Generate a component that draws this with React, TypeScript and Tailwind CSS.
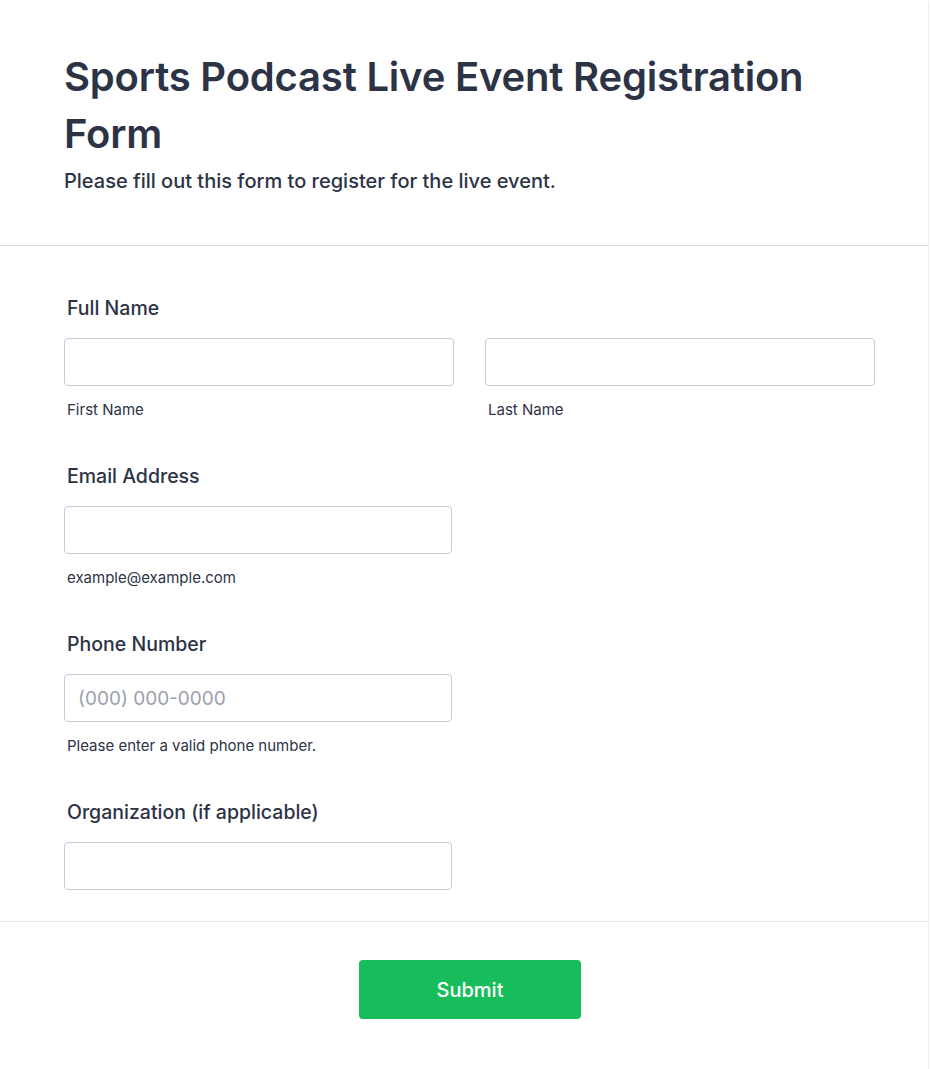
import React from 'react'

const font = { fontFamily: 'Inter, "Noto Sans", sans-serif' }

function Field({
  label,
  sub,
  placeholder,
  width = 'w-[388px]',
}: {
  label: string
  sub?: string
  placeholder?: string
  width?: string
}) {
  return (
    <div className="flex flex-col">
      <label className="pl-[3px] text-[19.5px] leading-[28px] font-medium text-[#2c3345]">{label}</label>
      <input
        type="text"
        placeholder={placeholder}
        className={`mt-4 h-12 ${width} rounded-[4px] border border-[#c3cad8] bg-white px-[13px] text-[19px] text-[#2c3345] placeholder:text-[#9ba1ac] focus:outline-none`}
      />
      {sub && <div className="mt-[14px] pl-[3px] text-[15px] leading-5 text-[#2c3345]">{sub}</div>}
    </div>
  )
}

export default function App() {
  return (
    <div className="min-h-[1069px] bg-white" style={font}>
      <div className="w-[929px] min-h-[1069px] bg-white border-r border-[#ebebf2] rounded-tr-[4px] flex flex-col">
        {/* Header */}
        <div className="px-16 pt-[48px] pb-[53px] border-b border-[#dcdce6]">
          <h1 className="text-[40px] leading-[57px] font-semibold text-[#2c3345] tracking-[-0.2px]">
            Sports Podcast Live Event Registration Form
          </h1>
          <p className="mt-[8px] text-[20px] leading-[22px] font-medium text-[#2c3345]">
            Please fill out this form to register for the live event.
          </p>
        </div>

        {/* Fields */}
        <div className="px-16 pt-[48px] pb-[31px] flex flex-col gap-[42px] border-b border-[#e6e6ee]">
          <div className="flex flex-col">
            <label className="pl-[3px] text-[19.5px] leading-[28px] font-medium text-[#2c3345]">Full Name</label>
            <div className="mt-4 flex gap-[31px]">
              <div className="flex flex-col">
                <input type="text" className="h-12 w-[390px] rounded-[4px] border border-[#c3cad8] bg-white focus:outline-none" />
                <div className="mt-[14px] pl-[3px] text-[15px] leading-5 text-[#2c3345]">First Name</div>
              </div>
              <div className="flex flex-col">
                <input type="text" className="h-12 w-[390px] rounded-[4px] border border-[#c3cad8] bg-white focus:outline-none" />
                <div className="mt-[14px] pl-[3px] text-[15px] leading-5 text-[#2c3345]">Last Name</div>
              </div>
            </div>
          </div>
          <Field label="Email Address" sub="example@example.com" />
          <Field label="Phone Number" placeholder="(000) 000-0000" sub="Please enter a valid phone number." />
          <Field label="Organization (if applicable)" />
        </div>

        {/* Footer */}
        <div className="flex justify-center pt-[38px] pb-[50px] pl-[12px]">
          <button className="h-[59px] w-[222px] rounded-[4px] bg-[#18bd5b] text-[20px] font-medium text-white">
            Submit
          </button>
        </div>
      </div>
    </div>
  )
}
